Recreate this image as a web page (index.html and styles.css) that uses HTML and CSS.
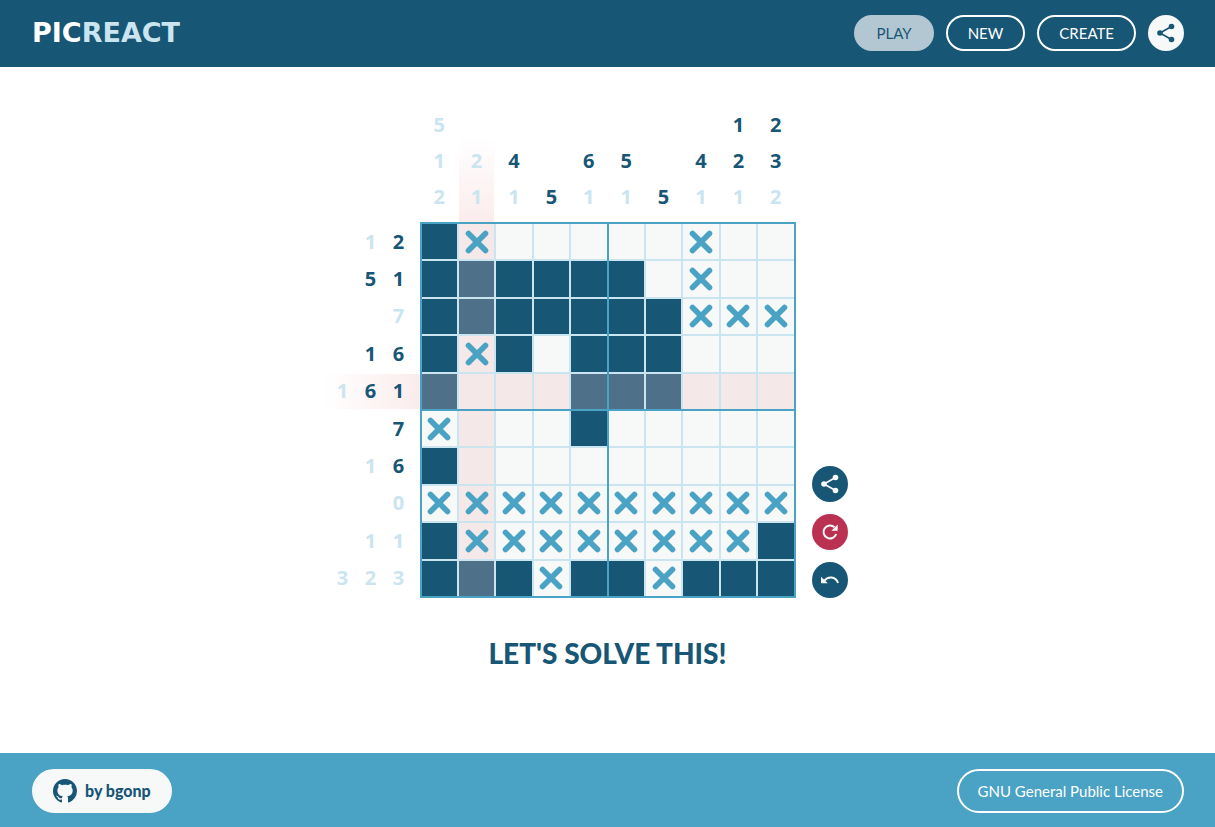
FILE: index.html
```html
<!DOCTYPE html>
<html lang="en">
<head>
<meta charset="utf-8">
<meta name="viewport" content="width=device-width, initial-scale=1">
<title>Picreact</title>
<link rel="stylesheet" href="styles.css">
</head>
<body>
<svg class="sprite" aria-hidden="true">
  <symbol id="share" viewBox="0 0 20 20"><path d="M15.500 3.500 4 10l11.500 6.500" fill="none" stroke="currentColor" stroke-width="1.700"/><circle cx="15.500" cy="3.500" r="2.800" fill="currentColor"/><circle cx="4" cy="10" r="2.800" fill="currentColor"/><circle cx="15.500" cy="16.500" r="2.800" fill="currentColor"/></symbol>
  <symbol id="cross" viewBox="0 0 24 24"><path d="M3.500 3.500 20.500 20.500M20.500 3.500 3.500 20.500" fill="none" stroke="currentColor" stroke-width="5.600" stroke-linecap="round"/></symbol>
  <symbol id="reset" viewBox="0 0 20 20"><path d="M14.600 5.300A6.500 6.500 0 1 0 16.200 12" fill="none" stroke="currentColor" stroke-width="2"/><path d="M17.700 2.500v6.300h-6.300z" fill="currentColor"/></symbol>
  <symbol id="undo" viewBox="0 0 20 20"><path d="M4 11C8 6 15.500 6.200 18 13" fill="none" stroke="currentColor" stroke-width="2"/><path d="M1 6.700v6.600h6.800z" fill="currentColor"/></symbol>
</svg>
<header class="header">
  <h1 class="logo">PIC<span class="logo-accent">REACT</span></h1>
  <nav class="nav">
    <button class="pill pill-active" type="button">PLAY</button>
    <button class="pill" type="button">NEW</button>
    <button class="pill" type="button">CREATE</button>
    <button class="round round-light" type="button" aria-label="Share"><svg class="icon"><use href="#share"/></svg></button>
  </nav>
</header>
<main class="main">
  <div class="game">
    <div class="col-clues" id="col-clues"></div>
    <div class="row-clues" id="row-clues"></div>
    <div class="board" id="board"></div>
    <div class="tools">
      <button class="round" type="button" aria-label="Share puzzle"><svg class="icon"><use href="#share"/></svg></button>
      <button class="round round-danger" type="button" aria-label="Reset"><svg class="icon"><use href="#reset"/></svg></button>
      <button class="round" type="button" aria-label="Undo"><svg class="icon"><use href="#undo"/></svg></button>
    </div>
  </div>
  <h2 class="message">LET'S SOLVE THIS!</h2>
</main>
<footer class="footer">
  <a class="link link-author" href="#author"><svg class="github" viewBox="0 0 16 16" aria-hidden="true"><path fill="currentColor" d="M8 0C3.580 0 0 3.580 0 8c0 3.540 2.290 6.530 5.470 7.590.4.070.55-.17.55-.38 0-.19-.01-.82-.01-1.490-2.010.37-2.530-.49-2.690-.94-.09-.23-.48-.94-.82-1.130-.28-.15-.68-.52-.01-.53.63-.01 1.080.58 1.230.82.72 1.210 1.870.87 2.330.66.07-.52.28-.87.51-1.070-1.780-.2-3.640-.89-3.640-3.950 0-.87.31-1.590.82-2.150-.08-.2-.36-1.020.08-2.120 0 0 .67-.21 2.200.82.64-.18 1.320-.27 2-.27s1.360.09 2 .27c1.530-1.040 2.200-.82 2.200-.82.44 1.100.16 1.920.08 2.120.51.56.82 1.270.82 2.150 0 3.070-1.870 3.750-3.650 3.950.29.25.54.73.54 1.480 0 1.070-.01 1.930-.01 2.200 0 .21.15.46.55.38A8.010 8.010 0 0 0 16 8c0-4.420-3.580-8-8-8z"/></svg>by bgonp</a>
  <a class="link" href="#license">GNU General Public License</a>
</footer>
<script src="game.js"></script>
</body>
</html>
```
FILE: styles.css
```css
:root {
  --dark: #185676;
  --teal: #4aa2c4;
  --light: #cbe5f0;
  --paper: #f7f9f9;
  --pink: #f4e9e8;
  --red: #bb3152;
}

* { box-sizing: border-box; }

body {
  display: flex;
  flex-direction: column;
  min-height: 100vh;
  margin: 0;
  background: #fff;
  color: var(--dark);
  font: 15px/20px Lato, "Open Sans", sans-serif;
}

button { font: inherit; cursor: pointer; }

.sprite { position: absolute; width: 0; height: 0; }

.header {
  display: flex;
  align-items: center;
  justify-content: space-between;
  padding: 15px 31px 16px 32px;
  background: var(--dark);
}

.logo { margin: 0; color: #fff; font: 700 27px/36px "DejaVu Sans", sans-serif; }
.logo-accent { color: var(--light); }

.nav { display: flex; gap: 12px; }

.pill {
  height: 36px;
  padding: 0 20px;
  border: 2px solid #fff;
  border-radius: 18px;
  background: transparent;
  color: #fff;
}
.pill-active { border-color: #b3c7d2; background: #b3c7d2; color: var(--dark); }

.round {
  display: grid;
  place-items: center;
  width: 36px;
  height: 36px;
  padding: 0;
  border: 0;
  border-radius: 50%;
  background: var(--dark);
  color: var(--paper);
}
.round-light { background: var(--paper); color: var(--dark); }
.round-danger { background: var(--red); }
.icon { width: 20px; height: 20px; }

.main {
  display: flex;
  flex: 1;
  flex-direction: column;
  align-items: center;
  padding: 33px 0;
}

.game {
  display: grid;
  grid-template-columns: 1fr min(376px, 60vw) 1fr;
  width: 100%;
}

.col-clues {
  display: grid;
  grid-column: 2;
  grid-template-columns: repeat(10, 1fr);
  gap: 2px;
  align-items: end;
  padding: 0 2px;
}

.row-clues {
  display: grid;
  grid-column: 1;
  grid-template-rows: repeat(10, 1fr);
  gap: 2px;
  justify-items: end;
  padding: 2px 0;
}

.clues { display: flex; align-items: center; font: 700 20px/36px "Noto Sans", "Open Sans", sans-serif; }
.col-clues .clues { flex-direction: column; padding: 7px 0; }
.row-clues .clues { padding: 0 7px; }
.col-clues .active { background: linear-gradient(#fff, #fbecec); }
.row-clues .active { background: linear-gradient(90deg, #fff, #fbecec); }
.clue { width: 28px; text-align: center; }
.row-clues .clue { line-height: 28px; }
.done { color: var(--light); }

.board {
  position: relative;
  display: grid;
  grid-template: repeat(10, 1fr) / repeat(10, 1fr);
  gap: 2px;
  aspect-ratio: 1;
  border: 2px solid var(--teal);
  background: var(--light);
}
.board::before,
.board::after { content: ""; position: absolute; background: var(--teal); }
.board::before { top: 0; bottom: 0; left: calc(50% - 1px); width: 2px; }
.board::after { right: 0; left: 0; top: calc(50% - 1px); height: 2px; }

.cell {
  display: grid;
  place-items: center;
  min-width: 0;
  min-height: 0;
  padding: 0;
  border: 0;
  background: var(--paper);
  color: var(--teal);
}
.cell.active { background: var(--pink); }
.cell.filled { background: var(--dark); }
.cell.filled.active { background: #4e7088; }
.cross { width: 24px; height: 24px; }

.tools {
  display: flex;
  flex-direction: column;
  align-items: flex-start;
  justify-content: flex-end;
  gap: 12px;
  padding-left: 16px;
}

.message { margin: 37px 0 0; font: 900 28px/36px Lato, sans-serif; }

.footer {
  display: flex;
  align-items: center;
  justify-content: space-between;
  padding: 16px 31px 14px 32px;
  background: var(--teal);
}

.link {
  display: flex;
  align-items: center;
  gap: 8px;
  height: 44px;
  padding: 0 19px;
  border: 2px solid #fff;
  border-radius: 22px;
  color: #fff;
  text-decoration: none;
}
.link-author {
  border-color: var(--paper);
  background: var(--paper);
  color: var(--dark);
  font-size: 16px;
  font-weight: 900;
}
.github { width: 24px; height: 24px; }
```
FILE: game.js
```js
const rows = [
  "#x.....x..",
  "######.x..",
  "#######xxx",
  "#x#.###...",
  "#...###...",
  "x...#.....",
  "#.........",
  "xxxxxxxxxx",
  "#xxxxxxxx#",
  "###x##x###"
];

// A trailing "d" marks a clue that is already solved.
const colClues = ["5d 1d 2d", "2d 1d", "4 1d", "5", "6 1d", "5 1d", "5", "4 1d", "1 2 1d", "2 3 2d"];
const rowClues = ["1d 2", "5 1", "7d", "1 6", "1d 6 1", "7", "1d 6", "0d", "1d 1d", "3d 2d 3d"];
const activeRow = 4;
const activeCol = 1;

function renderClues(id, list, active) {
  document.getElementById(id).innerHTML = list.map((line, i) => {
    const items = line.split(" ").map(c =>
      `<span class="clue${c.endsWith("d") ? " done" : ""}">${parseInt(c, 10)}</span>`).join("");
    return `<div class="clues${i === active ? " active" : ""}">${items}</div>`;
  }).join("");
}

renderClues("col-clues", colClues, activeCol);
renderClues("row-clues", rowClues, activeRow);

document.getElementById("board").innerHTML = rows.map((row, y) =>
  [...row].map((value, x) => {
    const names = ["cell"];
    if (value === "#") names.push("filled");
    if (y === activeRow || x === activeCol) names.push("active");
    const mark = value === "x" ? '<svg class="cross"><use href="#cross"/></svg>' : "";
    return `<button type="button" class="${names.join(" ")}" aria-label="Row ${y + 1}, column ${x + 1}">${mark}</button>`;
  }).join("")).join("");
```
